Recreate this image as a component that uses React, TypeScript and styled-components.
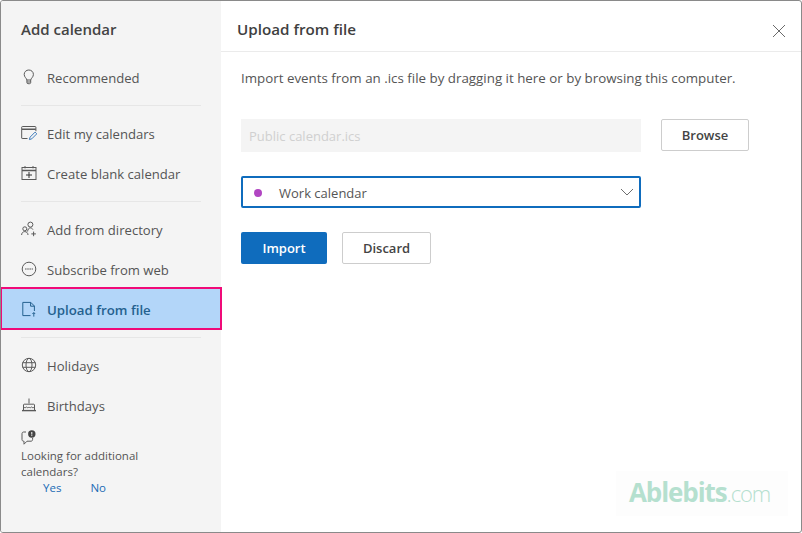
import styled, { createGlobalStyle } from 'styled-components'

const GlobalStyle = createGlobalStyle`
  html, body {
    margin: 0;
    padding: 0;
    background: #ffffff;
  }
  * {
    box-sizing: border-box;
  }
`

const BulbIcon = () => (
  <Icon viewBox="0 0 16 16">
    <path d="M5.9 11C5.6 9.2 3.2 8.2 3.2 5.4 3.2 2.8 5.3 1 7.8 1s4.6 1.8 4.6 4.4c0 2.8-2.4 3.8-2.7 5.6z" stroke="#5a5a5a" />
    <path d="M5.9 11v2.6c0 .6.5 1.1 1.1 1.1h1.6c.6 0 1.1-.5 1.1-1.1V11M6 13h3.6" stroke="#5a5a5a" />
  </Icon>
)

const EditIcon = () => (
  <Icon viewBox="0 0 16 16">
    <path d="M6.5 13.5H1.2a.5.5 0 0 1-.5-.5V2.2c0-.4.3-.7.7-.7h12.8c.4 0 .7.3.7.7v4" stroke="#5a5a5a" />
    <path d="M1 4.2h13.8" stroke="#5a5a5a" strokeWidth="1.4" />
    <path d="M8.4 14.6l.7-2.5 5-5 1.7 1.7-5 5z" stroke="#3f7cbc" />
  </Icon>
)

const PlusCalIcon = () => (
  <Icon viewBox="0 0 16 16">
    <rect x="1" y="2.5" width="14" height="12" stroke="#5a5a5a" />
    <path d="M1 5.5h14" stroke="#5a5a5a" strokeWidth="1.4" />
    <path d="M4 1v2.4M12 1v2.4" stroke="#5a5a5a" />
    <path d="M8 7v6M5 10h6" stroke="#333333" />
  </Icon>
)

const DirectoryIcon = () => (
  <Icon viewBox="0 0 16 16">
    <circle cx="9.4" cy="3.6" r="2.5" stroke="#5a5a5a" />
    <path d="M6.6 10.5c0-2 1.2-3.6 2.8-3.6 1.1 0 2 .6 2.5 1.6" stroke="#5a5a5a" />
    <circle cx="3.8" cy="7.8" r="2" stroke="#5a5a5a" />
    <path d="M.6 14c0-2 1.4-3.4 3.2-3.4S7 12 7 14" stroke="#5a5a5a" />
    <path d="M12.6 10.6v4.6M10.3 12.9h4.6" stroke="#5a5a5a" />
  </Icon>
)

const SubscribeIcon = () => (
  <Icon viewBox="0 0 16 16">
    <circle cx="8" cy="8" r="6.8" stroke="#5a5a5a" />
    <path d="M4 8h8" stroke="#5a5a5a" strokeDasharray="1.6 .6" strokeWidth="1.2" />
  </Icon>
)

const UploadIcon = () => (
  <Icon viewBox="0 0 16 16">
    <path d="M9.5 14.6H1.8V1.4h8l3.6 3.6v5" stroke="#24618f" />
    <path d="M9.6 1.4v3.8h3.8" stroke="#24618f" />
    <path d="M12.8 15.6v-4M11.4 13l1.4-1.4 1.4 1.4" stroke="#24618f" />
  </Icon>
)

const GlobeIcon = () => (
  <Icon viewBox="0 0 16 16">
    <circle cx="8" cy="8" r="6.7" stroke="#5a5a5a" />
    <ellipse cx="8" cy="8" rx="3" ry="6.7" stroke="#5a5a5a" />
    <path d="M1.6 5.7h12.8M1.6 10.3h12.8" stroke="#5a5a5a" />
  </Icon>
)

const CakeIcon = () => (
  <Icon viewBox="0 0 16 16">
    <path d="M8 1.5v5" stroke="#5a5a5a" />
    <path d="M2.5 13.5V7.9c0-.4.3-.7.7-.7h9.6c.4 0 .7.3.7.7v5.6" stroke="#5a5a5a" />
    <path d="M2.5 10c1 .9 2.2.9 3 0 .8.9 1.8.9 2.5 0 .7.9 1.7.9 2.5 0 .8.9 2 .9 3 0" stroke="#5a5a5a" />
    <path d="M1 13.6h14" stroke="#5a5a5a" strokeWidth="1.4" />
  </Icon>
)

const FeedbackIcon = () => (
  <FeedbackSvg viewBox="0 0 16 16">
    <path d="M5 2H2.6C1.7 2 1 2.7 1 3.6v6c0 .9.7 1.6 1.6 1.6H3v3l3-3h4c.9 0 1.6-.7 1.6-1.6V8" stroke="#5a5a5a" fill="none" />
    <circle cx="10.8" cy="4" r="3.7" fill="#444444" />
    <path d="M10.8 2v2.6M10.8 5.2v.9" stroke="#ffffff" strokeWidth="1" />
  </FeedbackSvg>
)

const Chevron = () => (
  <ChevronSvg viewBox="0 0 14 8">
    <path d="M1 1l6 6 6-6" stroke="#6e6e6e" fill="none" />
  </ChevronSvg>
)

const CloseIcon = () => (
  <CloseSvg viewBox="0 0 14 14">
    <path d="M1 1l12 12M13 1L1 13" stroke="#6a6a6a" fill="none" />
  </CloseSvg>
)

export default function App () {
  return <>
    <GlobalStyle />
    <Frame>
      <Sidebar>
        <SideTitle>Add calendar</SideTitle>
        <NavItem><BulbIcon />Recommended</NavItem>
        <Divider />
        <NavItem><EditIcon />Edit my calendars</NavItem>
        <NavItem><PlusCalIcon />Create blank calendar</NavItem>
        <Divider />
        <NavItem><DirectoryIcon />Add from directory</NavItem>
        <NavItem><SubscribeIcon />Subscribe from web</NavItem>
        <ActiveItem><UploadIcon />Upload from file</ActiveItem>
        <Divider />
        <NavItem><GlobeIcon />Holidays</NavItem>
        <NavItem><CakeIcon />Birthdays</NavItem>
        <Feedback>
          <FeedbackIcon />
          <FeedbackText>Looking for additional calendars?</FeedbackText>
          <FeedbackLinks>
            <FeedbackLink>Yes</FeedbackLink>
            <FeedbackLink>No</FeedbackLink>
          </FeedbackLinks>
        </Feedback>
      </Sidebar>
      <Main>
        <Header>
          <HeaderTitle>Upload from file</HeaderTitle>
          <CloseIcon />
        </Header>
        <Content>
          <Intro>Import events from an .ics file by dragging it here or by browsing this computer.</Intro>
          <FileRow>
            <FileField>Public calendar.ics</FileField>
            <OutlineButton $width={88}>Browse</OutlineButton>
          </FileRow>
          <Select>
            <Dot />
            <SelectText>Work calendar</SelectText>
            <Chevron />
          </Select>
          <Actions>
            <PrimaryButton>Import</PrimaryButton>
            <OutlineButton $width={89}>Discard</OutlineButton>
          </Actions>
        </Content>
        <Watermark><b>Ablebits</b>.com</Watermark>
      </Main>
    </Frame>
  </>
}

const Frame = styled.div`
  display: flex;
  width: 802px;
  height: 533px;
  border: 1px solid #8a8a8a;
  border-radius: 3px;
  overflow: hidden;
  font-family: "Open Sans", "Noto Sans", sans-serif;
  background: #ffffff;
`

const Sidebar = styled.aside`
  flex: 0 0 220px;
  min-width: 0;
  display: flex;
  flex-direction: column;
  background: #f4f4f4;
`

const SideTitle = styled.h2`
  margin: 0;
  height: 57px;
  padding: 17px 0 0 20px;
  font-size: 15px;
  line-height: 22px;
  font-weight: 600;
  color: #444444;
`

const NavItem = styled.div`
  display: flex;
  align-items: center;
  gap: 10px;
  height: 40px;
  padding-left: 20px;
  font-size: 13.1px;
  color: #555555;
`

const ActiveItem = styled(NavItem)`
  position: relative;
  z-index: 1;
  flex: none;
  width: 221px;
  height: 43px;
  margin: -3px 0 0;
  padding: 2px 0 0 20px;
  background: #b3d6f9;
  border: 2px solid #f00a78;
  border-left-width: 1px;
  font-size: 13.25px;
  font-weight: 600;
  color: #24618f;
  & > svg {
    margin-left: -1px;
  }
`

const Icon = styled.svg`
  flex: 0 0 16px;
  width: 16px;
  height: 16px;
  margin-top: -2px;
  fill: none;
`

const Divider = styled.hr`
  flex: none;
  width: 180px;
  height: 1px;
  margin: 7px 0 8px 20px;
  border: none;
  background: #e6e6e6;
`

const Feedback = styled.div`
  padding: 4px 0 0 20px;
  font-size: 11.5px;
  line-height: 16px;
  color: #555555;
`

const FeedbackSvg = styled.svg`
  display: block;
  width: 16px;
  height: 16px;
  margin-bottom: 2px;
`

const FeedbackText = styled.div`
  width: 130px;
`

const FeedbackLinks = styled.div`
  display: flex;
  gap: 29px;
  padding-left: 22px;
`

const FeedbackLink = styled.span`
  color: #1a6bb5;
`

const Main = styled.main`
  position: relative;
  flex: 1;
  display: flex;
  flex-direction: column;
`

const Header = styled.header`
  flex: none;
  display: flex;
  align-items: center;
  justify-content: space-between;
  height: 51px;
  padding: 6px 15px 0 16px;
  border-bottom: 1px solid #ebebeb;
`

const HeaderTitle = styled.h1`
  margin: 0;
  font-size: 15.2px;
  font-weight: 600;
  color: #3f3f3f;
`

const CloseSvg = styled.svg`
  width: 14px;
  height: 14px;
  margin-top: 4px;
`

const Content = styled.div`
  display: flex;
  flex-direction: column;
  padding: 0 20px;
`

const Intro = styled.p`
  margin: 16px 0 0;
  font-size: 13.35px;
  line-height: 20px;
  color: #555555;
`

const FileRow = styled.div`
  display: flex;
  align-items: flex-start;
  gap: 20px;
  margin-top: 31px;
`

const FileField = styled.div`
  width: 400px;
  height: 33px;
  padding-left: 8px;
  background: #f4f4f4;
  font-size: 13px;
  line-height: 35px;
  color: #d0d0d0;
`

const OutlineButton = styled.button<{ $width: number }>`
  width: ${p => p.$width}px;
  height: 32px;
  padding: 0;
  background: #ffffff;
  border: 1px solid #cdcdcd;
  border-radius: 2px;
  font-family: inherit;
  font-size: 13px;
  font-weight: 600;
  color: #444444;
`

const Select = styled.div`
  display: flex;
  align-items: center;
  width: 400px;
  height: 32px;
  margin-top: 24px;
  padding: 0 5px 0 11px;
  border: 2px solid #0f6cbd;
  border-radius: 2px;
  font-size: 13px;
  color: #555555;
`

const Dot = styled.span`
  flex: none;
  width: 8px;
  height: 8px;
  margin-top: 1px;
  border-radius: 50%;
  background: #b146c2;
`

const SelectText = styled.span`
  flex: 1;
  padding: 1px 0 0 17px;
`

const ChevronSvg = styled.svg`
  width: 14px;
  height: 8px;
  margin-top: -1px;
`

const Actions = styled.div`
  display: flex;
  gap: 15px;
  margin-top: 24px;
`

const PrimaryButton = styled.button`
  width: 86px;
  height: 32px;
  padding: 0;
  background: #0f6cbd;
  border: none;
  border-radius: 2px;
  font-family: inherit;
  font-size: 13px;
  font-weight: 600;
  color: #ffffff;
`

const Watermark = styled.div`
  position: absolute;
  right: 13px;
  bottom: 16px;
  width: 172px;
  height: 45px;
  background: #fdfdfd;
  padding-left: 13px;
  font-size: 22px;
  line-height: 43px;
  letter-spacing: -1.1px;
  font-weight: 300;
  color: #b5e0cf;
  & b {
    font-size: 26px;
    font-weight: 700;
  }
`
